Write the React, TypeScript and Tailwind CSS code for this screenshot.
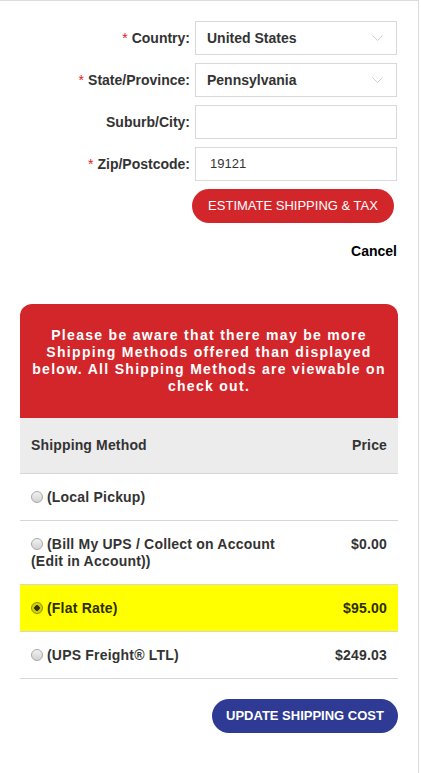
import React from 'react';

const FONT = { fontFamily: '"Liberation Sans", Arial, sans-serif' };

function Label({ text, required }: { text: string; required?: boolean }) {
  return (
    <div className="flex items-center justify-end text-[14px] font-bold text-[#333]">
      {required && <span className="mr-[4px] font-normal text-[#e02020]">*</span>}
      {text}
    </div>
  );
}

function SelectBox({ value }: { value: string }) {
  return (
    <div className="flex h-[34px] items-center justify-between border border-[#d9d9d9] bg-white pl-[11px] pr-[13px]">
      <span className="text-[14px] font-bold text-[#333]">{value}</span>
      <svg width="11" height="7" viewBox="0 0 11 7" fill="none">
        <polyline points="0.5,0.5 5.5,5.5 10.5,0.5" stroke="#cfcfcf" strokeWidth="1" />
      </svg>
    </div>
  );
}

function Radio({ checked }: { checked?: boolean }) {
  if (checked) {
    return (
      <span className="mr-[4px] inline-block h-[12px] w-[12px] rounded-full border border-[#8c8c00] bg-[radial-gradient(circle,#2f2f00_0,#2f2f00_2.5px,#cfcf00_3px,#d8d800_100%)] align-[-1px]" />
    );
  }
  return (
    <span className="mr-[4px] inline-block h-[12px] w-[12px] rounded-full border border-[#a8a8a8] bg-gradient-to-b from-[#f2f2f2] to-[#d2d2d2] align-[-1px]" />
  );
}

const ROWS = [
  { name: '(Local Pickup)', price: '' },
  { name: '(Bill My UPS / Collect on Account (Edit in Account))', price: '$0.00' },
  { name: '(Flat Rate)', price: '$95.00', checked: true },
  { name: '(UPS Freight\u00ae LTL)', price: '$249.03' },
];

export default function App() {
  return (
    <div style={FONT} className="min-h-[773px] w-[419px] border-r border-t border-[#dcdcdc] bg-white pl-5 pr-[20px] pt-[20px]">
      <div className="grid grid-cols-[1fr_202px] gap-x-[5px] gap-y-2 pr-[1px]">
        <Label text="Country:" required />
        <SelectBox value="United States" />
        <Label text="State/Province:" required />
        <SelectBox value="Pennsylvania" />
        <Label text="Suburb/City:" />
        <div className="h-[34px] border border-[#d9d9d9] bg-white" />
        <Label text="Zip/Postcode:" required />
        <div className="flex h-[34px] items-center border border-[#d9d9d9] bg-white pl-[14px] text-[13px] text-[#333]">19121</div>
      </div>

      <div className="mt-2 flex justify-end pr-[4px]">
        <button className="h-[34px] w-[202px] rounded-full bg-[#d3262b] text-[13px] text-white">ESTIMATE SHIPPING &amp; TAX</button>
      </div>

      <div className="mt-[20px] flex justify-end pr-[1px] text-[14px] font-bold leading-[17px] text-black">Cancel</div>

      <div className="mt-[44px] rounded-t-[12px] bg-[#d3262b] px-3 pb-[23px] pt-[23px] text-center text-[14px] font-bold leading-[17px] tracking-[1.3px] text-white">
        Please be aware that there may be more Shipping Methods offered than displayed below. All Shipping Methods are viewable on check out.
      </div>

      <div className="flex h-[56px] items-center justify-between border-b border-[#d6d6d6] bg-[#ececec] px-[11px] text-[14px] font-bold tracking-[0.15px] text-[#333]">
        <span>Shipping Method</span>
        <span>Price</span>
      </div>

      {ROWS.map((r) => (
        <div
          key={r.name}
          className={`flex items-start justify-between border-b border-[#d6d6d6] px-[11px] pb-[14px] pt-[15px] text-[14px] font-bold leading-[17px] tracking-[0.2px] ${
            r.checked ? 'bg-[#ffff00] text-[#2e2e00]' : 'text-[#333]'
          }`}
        >
          <div className="w-[262px]">
            <Radio checked={r.checked} />
            {r.name}
          </div>
          <div>{r.price}</div>
        </div>
      ))}

      <div className="mt-[20px] flex justify-end">
        <button className="h-[34px] w-[186px] rounded-full bg-[#2e3a93] text-[13px] font-bold text-white">UPDATE SHIPPING COST</button>
      </div>
    </div>
  );
}
